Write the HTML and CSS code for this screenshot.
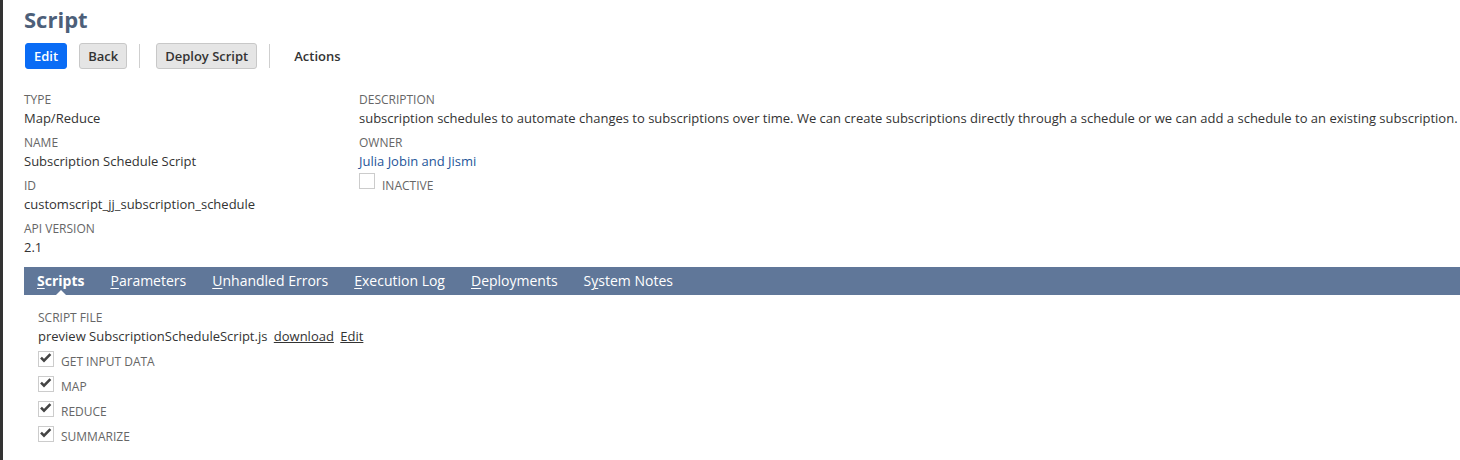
FILE: index.html
```html
<!DOCTYPE html>
<html>
<head>
<meta charset="utf-8">
<link rel="stylesheet" href="styles.css">
</head>
<body>
<div class="page">
  <h1 class="title">Script</h1>
  <div class="toolbar">
    <button class="btn btn-primary">Edit</button>
    <button class="btn">Back</button>
    <span class="sep"></span>
    <button class="btn">Deploy Script</button>
    <span class="sep"></span>
    <span class="actions">Actions</span>
  </div>
  <div class="fields">
    <div class="col col1">
      <div class="field"><div class="label">Type</div><div class="value">Map/Reduce</div></div>
      <div class="field"><div class="label">Name</div><div class="value">Subscription Schedule Script</div></div>
      <div class="field"><div class="label">ID</div><div class="value">customscript_jj_subscription_schedule</div></div>
      <div class="field"><div class="label">API Version</div><div class="value">2.1</div></div>
    </div>
    <div class="col col2">
      <div class="field"><div class="label">Description</div><div class="value">subscription schedules to automate changes to subscriptions over time. We can create subscriptions directly through a schedule or we can add a schedule to an existing subscription.</div></div>
      <div class="field"><div class="label">Owner</div><div class="value link">Julia Jobin and Jismi</div></div>
      <div class="inactive-row"><span class="box"></span><span class="label">Inactive</span></div>
    </div>
  </div>
  <div class="tabs">
    <span class="tab active"><u>S</u>cripts</span>
    <span class="tab"><u>P</u>arameters</span>
    <span class="tab"><u>U</u>nhandled Errors</span>
    <span class="tab"><u>E</u>xecution Log</span>
    <span class="tab"><u>D</u>eployments</span>
    <span class="tab">S<u>y</u>stem Notes</span>
  </div>
  <div class="tab-body">
    <div class="label">Script File</div>
    <div class="value file">preview SubscriptionScheduleScript.js <a class="ul">download</a> <a class="ul">Edit</a></div>
    <div class="checks">
      <div class="check-row"><span class="box"><svg viewBox="0 0 16 16" width="16" height="16"><path d="M3 6.6 L6 9.6 L12.4 3.2" fill="none" stroke="#444" stroke-width="2.6"/></svg></span><span class="label">Get Input Data</span></div>
      <div class="check-row"><span class="box"><svg viewBox="0 0 16 16" width="16" height="16"><path d="M3 6.6 L6 9.6 L12.4 3.2" fill="none" stroke="#444" stroke-width="2.6"/></svg></span><span class="label">Map</span></div>
      <div class="check-row"><span class="box"><svg viewBox="0 0 16 16" width="16" height="16"><path d="M3 6.6 L6 9.6 L12.4 3.2" fill="none" stroke="#444" stroke-width="2.6"/></svg></span><span class="label">Reduce</span></div>
      <div class="check-row"><span class="box"><svg viewBox="0 0 16 16" width="16" height="16"><path d="M3 6.6 L6 9.6 L12.4 3.2" fill="none" stroke="#444" stroke-width="2.6"/></svg></span><span class="label">Summarize</span></div>
    </div>
  </div>
</div>
</body>
</html>
```

FILE: styles.css
```css
html, body {
  margin: 0;
  padding: 0;
  background: #fff;
}
body {
  font-family: "Open Sans", "Liberation Sans", sans-serif;
  color: #333;
  height: 460px;
  overflow: hidden;
}
.page {
  border-left: 3px solid #333;
  height: 460px;
  padding-left: 21px;
  box-sizing: border-box;
}
.title {
  margin: 0;
  padding-top: 3px;
  font-size: 22px;
  font-weight: 700;
  color: #4d5f79;
  line-height: 32px;
}
.toolbar {
  display: flex;
  align-items: center;
  margin-top: 8px;
  height: 26px;
}
.btn {
  font-family: "Open Sans", "Liberation Sans", sans-serif;
  font-size: 13px;
  font-weight: 600;
  color: #333;
  background: #e5e5e5;
  border: 1px solid #c8c8c8;
  border-radius: 3px;
  height: 26px;
  padding: 0 8px;
  margin: 0 12px 0 0;
  cursor: pointer;
}
.btn-primary {
  background: #0a6cf5;
  border-color: #0a6cf5;
  color: #fff;
  margin-left: 1px;
}
.sep {
  width: 1px;
  height: 24px;
  background: #cfcfcf;
  margin: 0 16px 0 0;
}
.actions {
  font-size: 13px;
  font-weight: 600;
  margin-left: 8px;
}
.fields {
  display: flex;
  margin-top: 22px;
}
.col1 {
  width: 335px;
}
.col2 {
  flex: 1;
}
.field {
  height: 43px;
}
.label {
  font-size: 12px;
  text-transform: uppercase;
  color: #666;
  line-height: 18px;
}
.value {
  font-size: 13px;
  line-height: 18px;
  color: #333;
  white-space: nowrap;
}
.link {
  color: #255599;
}
.box {
  width: 16px;
  height: 16px;
  border: 1px solid #ccc;
  box-sizing: border-box;
  display: inline-block;
  margin-right: 7px;
  position: relative;
  flex: none;
}
.box svg {
  position: absolute;
  left: -1px;
  top: -1px;
}
.inactive-row {
  display: flex;
  align-items: flex-start;
  margin-top: -4px;
  height: 25px;
}
.inactive-row .label {
  padding-top: 4px;
}
.tabs {
  margin-top: 4px;
  height: 28px;
  background: #607799;
  display: flex;
  align-items: center;
  padding-left: 13px;
  gap: 26px;
}
.tab {
  color: #fff;
  font-size: 14px;
  line-height: 28px;
  position: relative;
}
.tab u {
  text-decoration-thickness: 1px;
  text-underline-offset: 2px;
}
.tab.active {
  font-weight: 700;
}
.tab.active::after {
  content: "";
  position: absolute;
  left: 50%;
  bottom: 0;
  margin-left: -5px;
  border-left: 5px solid transparent;
  border-right: 5px solid transparent;
  border-bottom: 5px solid #fff;
}
.tab-body {
  padding-left: 14px;
  padding-top: 14px;
}
.file a.ul {
  color: #333;
  text-decoration: underline;
  margin-left: 3px;
}
.checks {
  margin-top: 4px;
}
.check-row {
  display: flex;
  align-items: flex-start;
  height: 25px;
}
.check-row .box {
  margin-top: 2px;
}
.check-row .label {
  padding-top: 4px;
}
```
